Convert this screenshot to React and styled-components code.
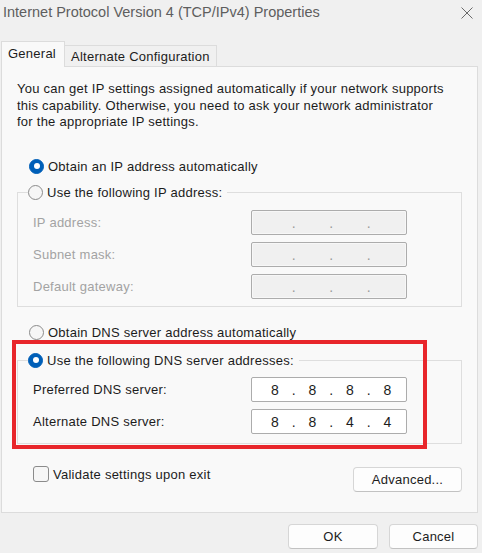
import React from "react";
import styled, { createGlobalStyle } from "styled-components";

const GlobalStyle = createGlobalStyle`
  html, body {
    margin: 0;
    padding: 0;
    background: #f0f0f0;
  }
  body {
    font-family: "Liberation Sans", Arial, sans-serif;
    font-size: 13px;
    letter-spacing: 0.25px;
    color: #1c1c1c;
  }
`;

const Window = styled.div`
  width: 482px;
  height: 553px;
  overflow: hidden;
  background: #f0f0f0;
  display: flex;
  flex-direction: column;
`;

const TitleBar = styled.div`
  display: flex;
  justify-content: space-between;
  align-items: flex-start;
  height: 41px;
  padding: 0 9px 0 3px;
  box-sizing: border-box;
`;

const Title = styled.div`
  font-size: 14.5px;
  letter-spacing: 0;
  line-height: 24px;
  color: #5e5e5e;
`;

const CloseIcon = styled.svg`
  margin-top: 7px;
`;

const TabRow = styled.div`
  display: flex;
  align-items: flex-end;
  height: 26px;
  padding-left: 1px;
  margin-bottom: -1px;
  position: relative;
  z-index: 1;
`;

const Tab = styled.div`
  box-sizing: border-box;
  height: ${(p) => (p.$active ? "26px" : "22px")};
  padding: ${(p) => (p.$active ? "0 8px 0 6px" : "0 6px")};
  line-height: ${(p) => (p.$active ? "23px" : "21px")};
  background: ${(p) => (p.$active ? "#f9f9f9" : "#f0f0f0")};
  border: 1px solid #dcdcdc;
  border-bottom: ${(p) => (p.$active ? "none" : "1px solid #dcdcdc")};
  border-left: ${(p) => (p.$active ? "1px solid #dcdcdc" : "none")};
  white-space: nowrap;
`;

const Panel = styled.div`
  box-sizing: border-box;
  height: 447px;
  margin: 0 4px 0 1px;
  padding: 14px 15px 0 15px;
  background: #f9f9f9;
  border: 1px solid #dcdcdc;
  display: flex;
  flex-direction: column;
`;

const Intro = styled.p`
  margin: 0;
  line-height: 16.5px;
  white-space: nowrap;
`;

const RadioRow = styled.label`
  display: flex;
  align-items: center;
  gap: 4px;
  height: 20px;
  margin-top: ${(p) => p.$mt || 0}px;
  padding-left: ${(p) => (p.$inLegend ? 0 : 12)}px;
  white-space: nowrap;
`;

const Radio = styled.span`
  box-sizing: border-box;
  width: 15px;
  height: 15px;
  border-radius: 50%;
  flex: none;
  position: relative;
  background: ${(p) => (p.$checked ? "#005fb8" : "#f6f6f6")};
  border: 1px solid ${(p) => (p.$checked ? "#005fb8" : "#8b8b8b")};
  &::after {
    content: "";
    display: ${(p) => (p.$checked ? "block" : "none")};
    position: absolute;
    left: 50%;
    top: 50%;
    width: 6px;
    height: 6px;
    margin: -3px 0 0 -3px;
    border-radius: 50%;
    background: #fff;
  }
`;

const Group = styled.fieldset`
  margin: ${(p) => p.$mt || 0}px 0 0 0;
  padding: ${(p) => p.$pt}px 54px ${(p) => p.$pb}px 15px;
  border: 1px solid #dedede;
  display: flex;
  flex-direction: column;
  gap: 7px;
  min-width: 0;
`;

const Legend = styled.legend`
  padding: 0 5px 0 0;
  margin-left: -5px;
  background: #f9f9f9;
`;

const FieldRow = styled.div`
  display: flex;
  align-items: center;
  justify-content: space-between;
  height: 25px;
`;

const FieldLabel = styled.span`
  color: ${(p) => (p.$disabled ? "#a3a3a3" : "#1c1c1c")};
`;

const IpBox = styled.div`
  box-sizing: border-box;
  width: 156px;
  height: 25px;
  padding-left: 8px;
  display: flex;
  align-items: center;
  border: 1px solid #acacac;
  border-radius: 2px;
  background: ${(p) => (p.$disabled ? "#f0f0f0" : "#ffffff")};
  box-shadow: inset 0 0 0 1px ${(p) => (p.$disabled ? "#f7f7f7" : "#ffffff")};
  color: ${(p) => (p.$disabled ? "#9a9a9a" : "#1c1c1c")};
  font-size: 14px;
  letter-spacing: 0;
`;

const Octet = styled.span`
  width: 30px;
  text-align: center;
`;

const Dot = styled.span`
  width: 7.5px;
  text-align: center;
`;

const DnsArea = styled.div`
  position: relative;
  margin-top: 8px;
`;

const Highlight = styled.div`
  position: absolute;
  left: -5px;
  top: -10px;
  width: 415px;
  height: 109px;
  box-sizing: border-box;
  border: 4px solid #e8262b;
  pointer-events: none;
`;

const BottomRow = styled.div`
  display: flex;
  justify-content: space-between;
  align-items: flex-start;
  margin-top: 21px;
  padding-left: 16px;
`;

const CheckLabel = styled.label`
  display: flex;
  align-items: center;
  gap: 4px;
  height: 18px;
`;

const CheckBox = styled.span`
  box-sizing: border-box;
  width: 16px;
  height: 16px;
  border: 1px solid #8b8b8b;
  border-radius: 3px;
  background: #f6f6f6;
`;

const Button = styled.button`
  box-sizing: border-box;
  width: ${(p) => p.$w}px;
  height: 25px;
  margin-top: ${(p) => p.$mt || 0}px;
  padding: 0;
  font: inherit;
  font-size: 13px;
  letter-spacing: 0.25px;
  color: #1c1c1c;
  background: #fdfdfd;
  border: 1px solid #d6d6d6;
  border-bottom-color: #c2c2c2;
  border-radius: 4px;
`;

const Footer = styled.div`
  display: flex;
  justify-content: flex-end;
  gap: 11px;
  margin-top: 11px;
  padding-right: 4px;
`;

const IpField = ({ value, disabled }) => {
  const parts = value || ["", "", "", ""];
  return (
    <IpBox $disabled={disabled}>
      {parts.map((p, i) => (
        <React.Fragment key={i}>
          <Octet>{p}</Octet>
          {i < 3 && <Dot>.</Dot>}
        </React.Fragment>
      ))}
    </IpBox>
  );
};

export default function App() {
  return (
    <>
      <GlobalStyle />
      <Window>
        <TitleBar>
          <Title>Internet Protocol Version 4 (TCP/IPv4) Properties</Title>
          <CloseIcon width="12" height="12" viewBox="0 0 12 12">
            <path d="M0.5 0.5 L11.5 11.5 M11.5 0.5 L0.5 11.5" stroke="#6a6a6a" strokeWidth="1" fill="none" />
          </CloseIcon>
        </TitleBar>
        <TabRow>
          <Tab $active>General</Tab>
          <Tab>Alternate Configuration</Tab>
        </TabRow>
        <Panel>
          <Intro>
            You can get IP settings assigned automatically if your network supports
            <br />
            this capability. Otherwise, you need to ask your network administrator
            <br />
            for the appropriate IP settings.
          </Intro>

          <RadioRow $mt={25.5}>
            <Radio $checked />
            Obtain an IP address automatically
          </RadioRow>

          <Group $mt={6} $pt={8} $pb={7}>
            <Legend>
              <RadioRow $inLegend>
                <Radio />
                Use the following IP address:
              </RadioRow>
            </Legend>
            <FieldRow>
              <FieldLabel $disabled>IP address:</FieldLabel>
              <IpField disabled />
            </FieldRow>
            <FieldRow>
              <FieldLabel $disabled>Subnet mask:</FieldLabel>
              <IpField disabled />
            </FieldRow>
            <FieldRow>
              <FieldLabel $disabled>Default gateway:</FieldLabel>
              <IpField disabled />
            </FieldRow>
          </Group>

          <RadioRow $mt={15}>
            <Radio />
            Obtain DNS server address automatically
          </RadioRow>

          <DnsArea>
            <Group $pt={7} $pb={9}>
              <Legend>
                <RadioRow $inLegend>
                  <Radio $checked />
                  Use the following DNS server addresses:
                </RadioRow>
              </Legend>
              <FieldRow>
                <FieldLabel>Preferred DNS server:</FieldLabel>
                <IpField value={["8", "8", "8", "8"]} />
              </FieldRow>
              <FieldRow>
                <FieldLabel>Alternate DNS server:</FieldLabel>
                <IpField value={["8", "8", "4", "4"]} />
              </FieldRow>
            </Group>
            <Highlight />
          </DnsArea>

          <BottomRow>
            <CheckLabel>
              <CheckBox />
              Validate settings upon exit
            </CheckLabel>
            <Button $w={109} $mt={2}>Advanced...</Button>
          </BottomRow>
        </Panel>
        <Footer>
          <Button $w={90}>OK</Button>
          <Button $w={89}>Cancel</Button>
        </Footer>
      </Window>
    </>
  );
}
